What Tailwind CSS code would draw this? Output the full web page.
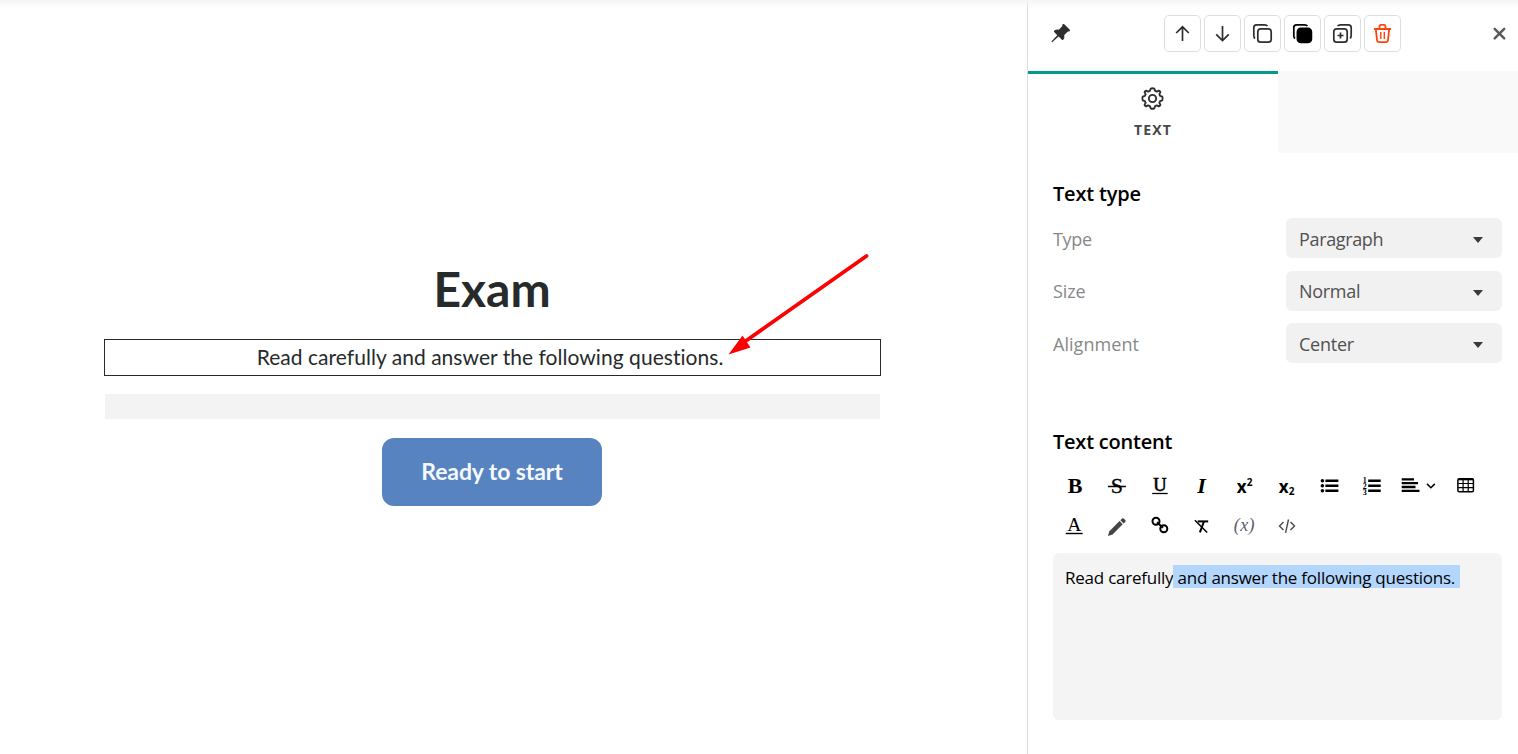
<!doctype html>
<html lang="en">
<head>
    <meta charset="utf-8">
    <meta name="viewport" content="width=device-width, initial-scale=1">
    <title>Exam editor</title>
    <script src="https://cdn.jsdelivr.net/npm/@tailwindcss/browser@4"></script>
</head>
<body class="relative flex h-[754px] overflow-hidden bg-white font-['Open_Sans',sans-serif]">

    <!-- Shadow of the top bar -->
    <div class="absolute inset-x-0 top-0 h-2 bg-linear-to-b from-[#f5f5f5] to-white/0"></div>

    <!-- Canvas -->
    <main class="flex w-[1027px] shrink-0 flex-col items-center pt-[259px] pr-[42px] font-['Lato',sans-serif] text-[#262a2b]">
        <h1 class="pr-px text-5xl leading-[60px] font-bold">Exam</h1>
        <div class="relative mt-[20px] h-[37px] w-[777px] border border-[#262a2b] text-center text-[21px] leading-[33px] tracking-[0.04px]">
            <p class="pr-[5px]">Read carefully and answer the following questions.</p>
            <svg class="absolute -top-[90px] left-[614.500px] h-[110px] w-[160px]" viewBox="0 0 160 110">
                <path d="M146.500 6 L25 91.500" stroke="#ff0000" stroke-width="3.800" stroke-linecap="round" />
                <path d="M8.500 104.500 L22.500 85.500 L30.500 97.500 Z" fill="#ff0000" />
            </svg>
        </div>
        <div class="mt-[18px] h-[25px] w-[775px] bg-[#f3f3f3]"></div>
        <button class="mt-[19px] mr-px h-[68px] w-[220px] rounded-xl bg-[#5783c0] pb-[2px] text-[23px] font-bold tracking-[-0.1px] text-[#f5f9ff]">Ready to start</button>
    </main>

    <!-- Settings panel -->
    <aside class="flex w-[491px] shrink-0 flex-col border-l border-[#dcdcdc]">
        <header class="flex h-[71px] items-start pt-[15px] pl-[22px]">
            <svg class="mt-[8px] h-[22px] w-[22px]" viewBox="0 0 22 22" fill="#2e2e2e">
                <path d="M12.600 1.200 Q13.500 .6 14.300 1.300 L19.800 6.800 Q20.400 7.600 19.500 8.300 Q18.700 8.700 17.900 8.500 L14.300 12.100 Q14.900 15 13.200 16.800 Q12.500 17.300 11.900 16.700 L8.600 13.500 L2.200 19.300 L1.400 18.500 L7.300 12.200 L4.100 9 Q3.600 8.400 4.200 7.800 Q6 6.200 8.800 6.700 L12.400 3.100 Q12 1.900 12.600 1.200 Z" />
            </svg>
            <div class="ml-[92px] flex gap-[3px]">
                <button class="h-[37px] w-[37px] rounded-[5px] border border-[#dedede]">
                    <svg class="h-[35px] w-[35px]" viewBox="1 1 35 35" fill="none" stroke="#2e2e2e" stroke-width="1.700">
                        <path d="M18.500 26 V12 M12.200 18 L18.500 11.800 L24.800 18" />
                    </svg>
                </button>
                <button class="h-[37px] w-[37px] rounded-[5px] border border-[#dedede]">
                    <svg class="h-[35px] w-[35px]" viewBox="1 1 35 35" fill="none" stroke="#2e2e2e" stroke-width="1.700">
                        <path d="M18.500 11 V25 M12.200 19.300 L18.500 25.500 L24.800 19.300" />
                    </svg>
                </button>
                <button class="h-[37px] w-[37px] rounded-[5px] border border-[#dedede]">
                    <svg class="h-[35px] w-[35px]" viewBox="1 1 35 35" fill="none" stroke="#2e2e2e" stroke-width="1.700">
                        <rect x="13.800" y="13.800" width="13.400" height="13.400" rx="3" />
                        <path d="M11 23.500 Q9.800 22.500 9.800 20.500 V12.500 Q9.800 9.800 12.500 9.800 H20.500 Q22.700 9.800 23.400 11" />
                    </svg>
                </button>
                <button class="h-[37px] w-[37px] rounded-[5px] border border-[#dedede]">
                    <svg class="h-[35px] w-[35px]" viewBox="1 1 35 35" fill="none" stroke="#000" stroke-width="1.700">
                        <rect x="13.400" y="13.400" width="14" height="14" rx="3.500" fill="#000" />
                        <path d="M11 23.500 Q9.800 22.500 9.800 20.500 V12.500 Q9.800 9.800 12.500 9.800 H20.500 Q22.700 9.800 23.400 11" />
                    </svg>
                </button>
                <button class="h-[37px] w-[37px] rounded-[5px] border border-[#dedede]">
                    <svg class="h-[35px] w-[35px]" viewBox="1 1 35 35" fill="none" stroke="#2e2e2e" stroke-width="1.700">
                        <rect x="9.800" y="13.800" width="13.400" height="13.400" rx="3" />
                        <path d="M13.600 11 Q14.400 9.800 16.500 9.800 H24.300 Q27.200 9.800 27.200 12.500 V20.500 Q27.200 22.600 26 23.400 M16.500 17.500 V23.500 M13.500 20.500 H19.500" />
                    </svg>
                </button>
                <button class="h-[37px] w-[37px] rounded-[5px] border border-[#dedede]">
                    <svg class="h-[35px] w-[35px]" viewBox="1 1 35 35" fill="none" stroke="#ff430f" stroke-width="1.800">
                        <path d="M10 14 H27 M11.800 14 L13 25 Q13.200 27.200 15 27.200 H22 Q23.800 27.200 24 25 L25.200 14 M15.500 13.500 V11.500 Q15.500 9.800 17 9.800 H20 Q21.500 9.800 21.500 11.500 V13.500" />
                        <path d="M16.800 17 V24 M20.300 17 V24" stroke-width="1.400" />
                    </svg>
                </button>
            </div>
            <svg class="mt-[11px] ml-[90px] h-4 w-4" viewBox="0 0 16 16" stroke="#5a5a5a" stroke-width="2.500" stroke-linecap="round">
                <path d="M3.700 2.800 L13.200 12.300 M13.200 2.800 L3.700 12.300" />
            </svg>
        </header>

        <!-- Tabs -->
        <div class="flex h-[82px]">
            <div class="flex w-[250px] flex-col items-center border-t-3 border-[#009b8d] pt-[12px]">
                <svg class="-ml-px h-[25px] w-[25px]" viewBox="0 0 24 24" fill="none" stroke="#2e2e2e" stroke-width="1.800" stroke-linejoin="round">
                    <path d="M10.300 2.600 Q12 1.800 13.700 2.600 L14.500 4.700 L16.200 5.400 L18.100 4.400 Q19.200 4.800 19.600 5.900 L18.600 7.800 L19.300 9.500 L21.400 10.300 Q22.200 12 21.400 13.700 L19.300 14.500 L18.600 16.200 L19.600 18.100 Q19.200 19.200 18.100 19.600 L16.200 18.600 L14.500 19.300 L13.700 21.400 Q12 22.200 10.300 21.400 L9.500 19.300 L7.800 18.600 L5.900 19.600 Q4.800 19.200 4.400 18.100 L5.400 16.200 L4.700 14.500 L2.600 13.700 Q1.800 12 2.600 10.300 L4.700 9.500 L5.400 7.800 L4.400 5.900 Q4.800 4.800 5.900 4.400 L7.800 5.400 L9.500 4.700 Z" />
                    <circle cx="12" cy="12" r="3.500" />
                </svg>
                <span class="mt-[9px] text-[14px] leading-5 font-bold tracking-[1.1px] text-[#484848]">TEXT</span>
            </div>
            <div class="flex-1 bg-[#f9f9f9]"></div>
        </div>

        <!-- Text type -->
        <section class="pt-[26px] pr-4 pl-[25px] text-lg tracking-[-0.3px] text-[#888]">
            <h2 class="text-xl leading-[30px] font-semibold tracking-[-0.2px] text-black">Text type</h2>
            <div class="mt-[9px] flex flex-col gap-[12.500px]">
                <div class="flex h-10 items-center justify-between">
                    <span class="pt-[2px]">Type</span>
                    <div class="flex h-10 w-[216px] items-center justify-between rounded-md bg-[#f1f1f1] pr-[19px] pl-[13px] tracking-[-0.35px] text-[#505050]">
                        <span class="pt-[2px]">Paragraph</span>
                        <svg class="mt-1 h-[6px] w-[10px]" viewBox="0 0 10 6" fill="#3a3a3a"><path d="M0 0 H10 L5 6 Z" /></svg>
                    </div>
                </div>
                <div class="flex h-10 items-center justify-between">
                    <span class="tracking-[-0.1px]">Size</span>
                    <div class="flex h-10 w-[216px] items-center justify-between rounded-md bg-[#f1f1f1] pr-[19px] pl-[13px] text-[#505050]">
                        <span>Normal</span>
                        <svg class="mt-1 h-[6px] w-[10px]" viewBox="0 0 10 6" fill="#3a3a3a"><path d="M0 0 H10 L5 6 Z" /></svg>
                    </div>
                </div>
                <div class="flex h-10 items-center justify-between">
                    <span class="pt-[2px] tracking-[0.05px]">Alignment</span>
                    <div class="flex h-10 w-[216px] items-center justify-between rounded-md bg-[#f1f1f1] pr-[19px] pl-[13px] tracking-[-0.23px] text-[#505050]">
                        <span class="pt-[2px]">Center</span>
                        <svg class="mt-1 h-[6px] w-[10px]" viewBox="0 0 10 6" fill="#3a3a3a"><path d="M0 0 H10 L5 6 Z" /></svg>
                    </div>
                </div>
            </div>
        </section>

        <!-- Text content -->
        <section class="pt-[64px] pr-4 pl-[25px]">
            <h2 class="text-xl leading-[30px] font-semibold tracking-[-0.23px]">Text content</h2>
            <div class="mt-[9px] flex h-10 pl-px font-['Liberation_Serif',serif]">
                <svg class="h-10 w-[42.400px]" viewBox="0 0 42 40">
                    <text x="21" y="27" font-size="22" font-weight="bold" text-anchor="middle">B</text>
                </svg>
                <svg class="h-10 w-[42.400px]" viewBox="0 0 42 40">
                    <text x="20.700" y="27" font-size="22" text-anchor="middle" stroke="#000" stroke-width=".3">S</text>
                    <path d="M11.700 20.500 H29.700" stroke="#000" stroke-width="1.500" />
                </svg>
                <svg class="h-10 w-[42.400px]" viewBox="0 0 42 40">
                    <text x="20.700" y="25" font-size="18.500" text-anchor="middle" stroke="#000" stroke-width=".6">U</text>
                    <path d="M13 27.500 H28.500" stroke="#000" stroke-width="1.300" />
                </svg>
                <svg class="h-10 w-[42.400px]" viewBox="0 0 42 40">
                    <text x="20.300" y="27" font-size="22" font-weight="bold" font-style="italic" text-anchor="middle">I</text>
                </svg>
                <svg class="h-10 w-[42.400px] font-['Open_Sans',sans-serif] font-bold" viewBox="0 0 42 40">
                    <text x="12.500" y="26.500" font-size="17">x</text>
                    <text x="22.500" y="20" font-size="10">2</text>
                </svg>
                <svg class="h-10 w-[42.400px] font-['Open_Sans',sans-serif] font-bold" viewBox="0 0 42 40">
                    <text x="12.500" y="26.500" font-size="17">x</text>
                    <text x="22.500" y="29" font-size="10">2</text>
                </svg>
                <svg class="h-10 w-[42.400px]" viewBox="0 0 42 40" stroke="#000" stroke-width="2.400">
                    <path d="M17.200 14.700 H30.200 M17.200 19.700 H30.200 M17.200 24.700 H30.200" />
                    <path d="M14.200 14.700 h.01 M14.200 19.700 h.01 M14.200 24.700 h.01" stroke-width="3.600" stroke-linecap="round" />
                </svg>
                <svg class="h-10 w-[42.400px] font-bold" viewBox="0 0 42 40" font-size="8">
                    <path d="M17 14.700 H29.500 M17 19.700 H29.500 M17 24.700 H29.500" stroke="#000" stroke-width="2.400" />
                    <text x="11.500" y="16.500">1</text>
                    <text x="11.500" y="22.500">2</text>
                    <text x="11.500" y="28.500">3</text>
                </svg>
                <svg class="h-10 w-[52px]" viewBox="0 0 52 40" fill="none" stroke="#000">
                    <path d="M8.700 13.400 H21 M8.700 17.200 H25 M8.700 21 H22.500 M8.700 24.800 H26.500" stroke-width="2.300" />
                    <path d="M34 17.900 L37.900 21.700 L41.800 17.900" stroke-width="1.500" />
                </svg>
                <svg class="h-10 w-[42.400px]" viewBox="0 0 42 40" fill="none" stroke="#000">
                    <rect x="12.700" y="12.700" width="15.500" height="13" rx="1.300" stroke-width="1.500" />
                    <path d="M13 13.300 H28" stroke-width="2" />
                    <path d="M13 17.500 H28 M13 21.700 H28 M17.900 13 V25.500 M23 13 V25.500" stroke-width="1.200" />
                </svg>
            </div>
            <div class="flex h-10 pl-px font-['Liberation_Serif',serif]">
                <svg class="h-10 w-[42.400px]" viewBox="0 0 42 40">
                    <text x="20" y="25" font-size="19.500" text-anchor="middle">A</text>
                    <path d="M11.500 27.500 H28.500" stroke="#000" stroke-width="1.400" />
                </svg>
                <svg class="h-10 w-[42.400px]" viewBox="0 0 42 40" fill="#444">
                    <path d="M11.700 30 L13.200 25.200 L23.300 15.100 L26.500 18.300 L16.400 28.400 Z" />
                    <path d="M24.200 14.200 L25.800 12.600 Q26.800 11.900 27.800 12.800 L29.100 14.100 Q29.800 15 29 15.900 L27.400 17.400 Z" />
                </svg>
                <svg class="h-10 w-[42.400px]" viewBox="0 0 42 40" fill="none" stroke="#000" stroke-width="2">
                    <circle cx="16.800" cy="15.200" r="3.500" />
                    <circle cx="24.600" cy="22.800" r="3.500" />
                    <path d="M17.800 16.200 L23.800 21.800" />
                </svg>
                <svg class="h-10 w-[42.400px]" viewBox="0 0 42 40" fill="none" stroke="#000">
                    <path d="M16.500 15.400 H27" stroke-width="2" />
                    <path d="M22.800 15.500 L18.700 26.300" stroke-width="2" />
                    <path d="M13.700 14.300 L26 26.500" stroke-width="1.500" />
                </svg>
                <svg class="h-10 w-[42.400px]" viewBox="0 0 42 40">
                    <text x="20.200" y="25" font-size="18" font-style="italic" text-anchor="middle" letter-spacing=".4" fill="#56606c">(x)</text>
                </svg>
                <svg class="h-10 w-[42.400px]" viewBox="0 0 42 40" fill="none" stroke="#4a4a4a" stroke-width="1.400">
                    <path d="M17.300 16 L13.300 20 L17.300 24 M24.300 16 L28.300 20 L24.300 24 M22.300 13.500 L19.400 26.800" />
                </svg>
            </div>
            <div class="mt-[7px] h-[167px] w-[449px] rounded-md bg-[#f4f4f4] pt-[12px] pl-[12px] text-[17px] leading-[25px] tracking-[-0.23px] whitespace-nowrap text-black">Read carefully<span class="inline-block h-[23px] w-[287px] bg-[#b3d6fd] align-top">&nbsp;and answer the following questions.</span></div>
        </section>
    </aside>

</body>
</html>
